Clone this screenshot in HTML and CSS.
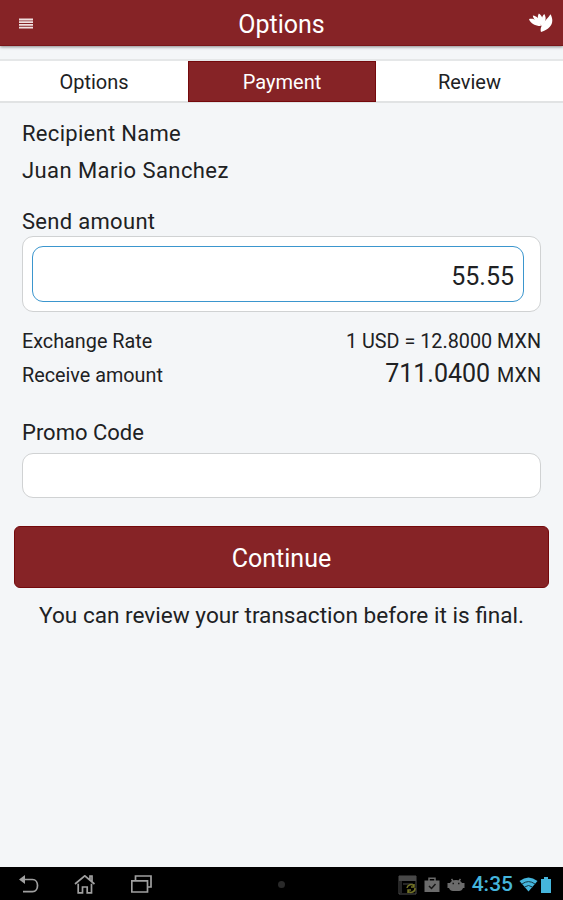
FILE: index.html
```html
<!DOCTYPE html>
<html lang="en">
  <head>
    <meta charset="UTF-8" />
    <meta name="viewport" content="width=device-width, initial-scale=1.0" />
    <title>Options</title>
    <link rel="stylesheet" href="styles.css">
  </head>
  <body>
    <header class="header">
      <svg class="menu-icon" viewBox="0 0 14 11">
        <path d="M0 1.500h14M0 4.200h14M0 6.900h14M0 9.600h14" />
      </svg>
      <h1>Options</h1>
      <svg class="logo" viewBox="0 0 24 20">
        <path d="M0 6C4 4.800 9.500 7 12 13C7 13.200 1.500 11 0 6Z" />
        <path d="M3.800 2.500C8 3 11.500 6.500 12.300 12C8.500 10 4.300 6.500 3.800 2.500Z" />
        <path d="M9.800 0.500C13.800 3 14.800 8 12.500 13C9 9 7.800 4 9.800 0.500Z" />
        <path d="M15.300 1C17.700 5 16.800 9.500 12.600 13C11.800 8.500 12.500 3.500 15.300 1Z" />
        <path d="M21.500 1.200C25.300 8 23.500 15.500 12 19C10 13 16 9 21.500 1.200Z" />
      </svg>
    </header>

    <nav class="tabs">
      <a class="tab">Options</a>
      <a class="tab active">Payment</a>
      <a class="tab">Review</a>
    </nav>

    <main class="content">
      <div class="label recipient">Recipient Name</div>
      <div class="label name">Juan Mario Sanchez</div>

      <label class="label send" for="amount">Send amount</label>
      <div class="amount-box">
        <input type="text" id="amount" value="55.55" />
      </div>

      <div class="row">
        <span class="rate-label">Exchange Rate</span>
        <span class="rate">1 USD = 12.8000 <b>MXN</b></span>
      </div>
      <div class="row">
        <span class="receive-label">Receive amount</span>
        <span class="receive"><span class="total">711.0400</span> <b>MXN</b></span>
      </div>

      <label class="label promo" for="promo">Promo Code</label>
      <input type="text" id="promo" />
    </main>

    <button class="continue">Continue</button>
    <p class="note">You can review your transaction before it is final.</p>

    <footer class="system-bar">
      <div class="nav-icons">
        <svg width="20" height="20" viewBox="0 0 20 20">
          <path class="solid" d="M0 4.500L6 0V9Z" />
          <path d="M5 4.500H13.500C20.200 4.500 20.200 16.700 13.500 16.700H4" />
        </svg>
        <svg width="22" height="20" viewBox="0 0 22 20">
          <path d="M1 9L10.800 0.800L20.500 9M16 4.500V1H18V6.500M4.200 8.800V17.800H8.500V12H13.200V17.800H17.500V8.800" />
        </svg>
        <svg width="22" height="20" viewBox="0 0 22 20">
          <path d="M0.800 5.800H16.500V17H0.800ZM4.500 5V1H20V12H17" />
        </svg>
      </div>
      <span class="dot"></span>
      <div class="status">
        <svg class="app" width="19" height="20" viewBox="0 0 19 20">
          <path class="frame" d="M1 1H18V19H1Z" />
          <path class="bar" d="M1 1H18V6H1Z" />
          <path class="marks" d="M3 6V18M5 9H15" />
          <path class="sync" d="M9 13A4 4 0 0 1 16 11M16 9V12H13M17 13A4 4 0 0 1 10 16M10 18V15H13" />
        </svg>
        <svg class="bag" width="16" height="16" viewBox="0 0 16 16">
          <path class="fill" d="M0.500 3.500H15.500V15H0.500Z" />
          <path class="handle" d="M5 4V1.200H11V4" />
          <path class="check" d="M5 9L7.500 11.500L11.500 7" />
        </svg>
        <svg class="robot" width="18" height="14" viewBox="0 0 18 14">
          <path class="fill" d="M0.500 5H3Q4.500 2 9 2T15 5H17.500V10H16Q15 13 12 13H6Q3 13 2 10H0.500Z" />
          <path class="ears" d="M4.500 1L6 3M13.500 1L12 3" />
          <path class="eyes" d="M5.500 5.500H7M11 5.500H12.500" />
        </svg>
        <span class="time">4:35</span>
        <svg class="wifi" width="19" height="15" viewBox="0 0 19 15">
          <path class="fan" d="M0.500 4Q9.500 -3 18.500 4L9.500 14.500Z" />
          <path class="waves" d="M3 7Q9.500 2.200 16 7M5.500 10Q9.500 7 13.500 10" />
        </svg>
        <svg class="battery" width="10" height="16" viewBox="0 0 10 16">
          <path d="M3 0H7V2H10V16H0V2H3Z" />
        </svg>
      </div>
    </footer>
  </body>
</html>
```
FILE: styles.css
```css
:root {
  --red: #862326;
  --page: #f4f6f8;
  --line: #d0d2d3;
  --blue: #45b5dc;
}

* {
  box-sizing: border-box;
}

body {
  margin: 0;
  height: 900px;
  display: flex;
  flex-direction: column;
  background-color: var(--page);
  color: #202123;
  font-family: Roboto, sans-serif;
  overflow: hidden;
}

.header {
  height: 46px;
  padding: 0 10px 0 19px;
  display: grid;
  grid-template-columns: 24px 1fr 24px;
  align-items: center;
  background-color: var(--red);
  border-bottom: 1px solid #781619;
  box-shadow: 0 1px 3px rgba(0, 0, 0, 0.45);
}

.menu-icon {
  width: 14px;
  height: 11px;
  margin-top: 1px;
  stroke: #f0dfdf;
  stroke-width: 1.8;
}

.header h1 {
  margin: 4px 0 0;
  padding-right: 9px;
  text-align: center;
  color: #fff;
  font-size: 25px;
  font-weight: 400;
  line-height: 30px;
}

.logo {
  width: 24px;
  height: 20px;
  fill: #fff;
}

.tabs {
  display: grid;
  grid-template-columns: 188px 188px 1fr;
  height: 44px;
  margin-top: 13px;
  border-top: 2px solid #e5e7e8;
  border-bottom: 2px solid #e1e3e4;
  background-color: #fff;
}

.tab {
  text-align: center;
  font-size: 20px;
  line-height: 43px;
}

.tab.active {
  height: 41px;
  background-color: var(--red);
  border: 1px solid #74090c;
  color: #fff;
  line-height: 41px;
}

.content {
  padding: 17px 22px 0;
}

.label {
  display: block;
  font-size: 22px;
  line-height: 28px;
}

.recipient,
.send {
  letter-spacing: 0.3px;
}

.name {
  margin-top: 9px;
  letter-spacing: 0.42px;
}

.send {
  margin-top: 23px;
}

.amount-box {
  height: 76px;
  padding: 9px 16px 9px 9px;
  border: 1px solid var(--line);
  border-radius: 11px;
  background-color: #fff;
}

input {
  display: block;
  width: 100%;
  font-family: inherit;
  color: inherit;
  background-color: #fff;
  outline: none;
}

#amount {
  height: 56px;
  padding: 5px 9px 0;
  border: 1px solid #3b96ce;
  border-radius: 11px;
  font-size: 25px;
  text-align: right;
}

.row {
  display: flex;
  justify-content: space-between;
  align-items: baseline;
  height: 32px;
  font-size: 19.8px;
  line-height: 32px;
}

.amount-box + .row {
  margin-top: 14px;
}

.row b {
  font-weight: 400;
}

.total {
  margin-right: 2px;
  font-size: 25px;
}

.promo {
  margin-top: 29px;
}

#promo {
  height: 45px;
  margin-top: 6px;
  border: 1px solid var(--line);
  border-radius: 11px;
}

.continue {
  height: 62px;
  margin: 28px 14px 0;
  padding: 3px 0 0;
  border: 1px solid #74090c;
  border-radius: 6px;
  background-color: var(--red);
  color: #fff;
  font-family: inherit;
  font-size: 25px;
}

.note {
  margin: 14px 0 0;
  text-align: center;
  font-size: 22.6px;
  line-height: 28px;
}

.system-bar {
  display: grid;
  grid-template-columns: 1fr 8px 1fr;
  align-items: center;
  height: 33px;
  margin-top: auto;
  padding: 0 12px 0 19px;
  background-color: #000;
}

.nav-icons {
  display: flex;
  gap: 35px;
  fill: none;
  stroke: #a0a0a0;
  stroke-width: 1.7;
}

.nav-icons .solid {
  fill: #a0a0a0;
  stroke: none;
}

.dot {
  width: 7px;
  height: 7px;
  margin-left: -3px;
  border-radius: 50%;
  background-color: #292929;
}

.status {
  display: flex;
  justify-content: flex-end;
  align-items: center;
  fill: none;
}

.frame,
.marks {
  stroke: #4d4d4d;
}

.bar {
  fill: #484848;
}

.sync {
  stroke: #747427;
  stroke-width: 1.5;
}

.bag,
.robot {
  margin-left: 7px;
}

.fill {
  fill: #6b6b6b;
}

.handle,
.ears {
  stroke: #6b6b6b;
  stroke-width: 1.5;
}

.check,
.eyes {
  stroke: #161616;
  stroke-width: 1.5;
}

.time {
  margin-left: 7px;
  color: var(--blue);
  font-size: 21px;
  font-weight: 500;
  line-height: 35px;
}

.wifi {
  margin-left: 6px;
}

.fan,
.battery {
  fill: var(--blue);
}

.waves {
  stroke: #123743;
  stroke-width: 1;
}

.battery {
  margin-left: 3px;
}
```
